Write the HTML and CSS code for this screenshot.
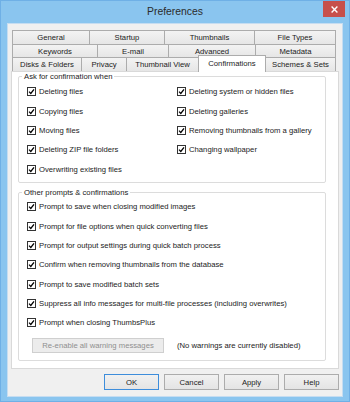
FILE: index.html
```html
<!DOCTYPE html>
<html>
<head>
<meta charset="utf-8">
<link rel="stylesheet" href="styles.css">
</head>
<body>
<div class="window">
  <div class="titlebar">
    <span></span>
    <div class="title">Preferences</div>
    <div class="close"><svg width="7" height="7" viewBox="0 0 7 7"><path d="M0.6 0.6L6.4 6.4M6.4 0.6L0.6 6.4" stroke="#fff" stroke-width="1.4"/></svg></div>
  </div>
  <div class="client">
    <div class="tabs">
      <div class="tabrow r1">
        <div class="tab">General</div>
        <div class="tab">Startup</div>
        <div class="tab">Thumbnails</div>
        <div class="tab">File Types</div>
      </div>
      <div class="tabrow r2">
        <div class="tab">Keywords</div>
        <div class="tab">E-mail</div>
        <div class="tab">Advanced</div>
        <div class="tab">Metadata</div>
      </div>
      <div class="tabrow r3">
        <div class="tab">Disks &amp; Folders</div>
        <div class="tab">Privacy</div>
        <div class="tab">Thumbnail View</div>
        <div class="tab active">Confirmations</div>
        <div class="tab">Schemes &amp; Sets</div>
      </div>
    </div>
    <div class="panel">
      <fieldset class="group g1">
        <legend>Ask for confirmation when</legend>
        <div class="grid">
          <label class="cb"><span class="box"><svg width="7" height="7" viewBox="0 0 7 7"><path d="M1 3.6L2.8 5.4L6 1.3" stroke="#000" stroke-width="1.3" fill="none"/></svg></span>Deleting files</label>
          <label class="cb"><span class="box"><svg width="7" height="7" viewBox="0 0 7 7"><path d="M1 3.6L2.8 5.4L6 1.3" stroke="#000" stroke-width="1.3" fill="none"/></svg></span>Copying files</label>
          <label class="cb"><span class="box"><svg width="7" height="7" viewBox="0 0 7 7"><path d="M1 3.6L2.8 5.4L6 1.3" stroke="#000" stroke-width="1.3" fill="none"/></svg></span>Moving files</label>
          <label class="cb"><span class="box"><svg width="7" height="7" viewBox="0 0 7 7"><path d="M1 3.6L2.8 5.4L6 1.3" stroke="#000" stroke-width="1.3" fill="none"/></svg></span>Deleting ZIP file folders</label>
          <label class="cb"><span class="box"><svg width="7" height="7" viewBox="0 0 7 7"><path d="M1 3.6L2.8 5.4L6 1.3" stroke="#000" stroke-width="1.3" fill="none"/></svg></span>Overwriting existing files</label>
          <label class="cb"><span class="box"><svg width="7" height="7" viewBox="0 0 7 7"><path d="M1 3.6L2.8 5.4L6 1.3" stroke="#000" stroke-width="1.3" fill="none"/></svg></span>Deleting system or hidden files</label>
          <label class="cb"><span class="box"><svg width="7" height="7" viewBox="0 0 7 7"><path d="M1 3.6L2.8 5.4L6 1.3" stroke="#000" stroke-width="1.3" fill="none"/></svg></span>Deleting galleries</label>
          <label class="cb"><span class="box"><svg width="7" height="7" viewBox="0 0 7 7"><path d="M1 3.6L2.8 5.4L6 1.3" stroke="#000" stroke-width="1.3" fill="none"/></svg></span>Removing thumbnails from a gallery</label>
          <label class="cb"><span class="box"><svg width="7" height="7" viewBox="0 0 7 7"><path d="M1 3.6L2.8 5.4L6 1.3" stroke="#000" stroke-width="1.3" fill="none"/></svg></span>Changing wallpaper</label>
        </div>
      </fieldset>
      <fieldset class="group g2">
        <legend>Other prompts &amp; confirmations</legend>
        <div class="list">
          <label class="cb"><span class="box"><svg width="7" height="7" viewBox="0 0 7 7"><path d="M1 3.6L2.8 5.4L6 1.3" stroke="#000" stroke-width="1.3" fill="none"/></svg></span>Prompt to save when closing modified images</label>
          <label class="cb"><span class="box"><svg width="7" height="7" viewBox="0 0 7 7"><path d="M1 3.6L2.8 5.4L6 1.3" stroke="#000" stroke-width="1.3" fill="none"/></svg></span>Prompt for file options when quick converting files</label>
          <label class="cb"><span class="box"><svg width="7" height="7" viewBox="0 0 7 7"><path d="M1 3.6L2.8 5.4L6 1.3" stroke="#000" stroke-width="1.3" fill="none"/></svg></span>Prompt for output settings during quick batch process</label>
          <label class="cb"><span class="box"><svg width="7" height="7" viewBox="0 0 7 7"><path d="M1 3.6L2.8 5.4L6 1.3" stroke="#000" stroke-width="1.3" fill="none"/></svg></span>Confirm when removing thumbnails from the database</label>
          <label class="cb"><span class="box"><svg width="7" height="7" viewBox="0 0 7 7"><path d="M1 3.6L2.8 5.4L6 1.3" stroke="#000" stroke-width="1.3" fill="none"/></svg></span>Prompt to save modified batch sets</label>
          <label class="cb"><span class="box"><svg width="7" height="7" viewBox="0 0 7 7"><path d="M1 3.6L2.8 5.4L6 1.3" stroke="#000" stroke-width="1.3" fill="none"/></svg></span>Suppress all info messages for multi-file processes (including overwrites)</label>
          <label class="cb"><span class="box"><svg width="7" height="7" viewBox="0 0 7 7"><path d="M1 3.6L2.8 5.4L6 1.3" stroke="#000" stroke-width="1.3" fill="none"/></svg></span>Prompt when closing ThumbsPlus</label>
        </div>
        <div class="actions">
          <button class="btn disabled">Re-enable all warning messages</button>
          <span class="note">(No warnings are currently disabled)</span>
        </div>
      </fieldset>
    </div>
    <div class="buttons">
      <button class="btn default">OK</button>
      <button class="btn">Cancel</button>
      <button class="btn">Apply</button>
      <button class="btn">Help</button>
    </div>
  </div>
</div>
</body>
</html>
```
FILE: styles.css
```css
* { box-sizing: border-box; }

body {
  margin: 0;
  width: 350px;
  height: 402px;
  overflow: hidden;
  background: #8ac5ef;
  font-family: "Liberation Sans", Arial, sans-serif;
  font-size: 7.7px;
  color: #1b1b1b;
}

.window {
  height: 402px;
  border: 1px solid #6fb0e6;
  padding: 0 6px 4px;
  display: flex;
  flex-direction: column;
}

.titlebar {
  height: 22px;
  margin: 0 -6px;
  display: grid;
  grid-template-columns: 1fr auto 1fr;
  align-items: start;
}

.title {
  font-size: 10.4px;
  line-height: 12px;
  padding-top: 5px;
  color: #2b2b2b;
}

.close {
  justify-self: end;
  margin-right: 4px;
  width: 22px;
  height: 16px;
  background: #c7504b;
  display: flex;
  align-items: center;
  justify-content: center;
}

.client {
  height: 374px;
  border: 1px solid #c6ddf1;
  background: #f0f0f0;
  padding: 6px 3px 0 3px;
  display: flex;
  flex-direction: column;
}

.tabs {
  margin-left: 1px;
  width: 324px;
}

.tabrow {
  display: flex;
  align-items: flex-start;
}

.r1 { height: 14px; }
.r2 { height: 13px; }
.r3 { height: 14px; }

.tab {
  height: 100%;
  border: 1px solid #acacac;
  border-bottom: none;
  margin-left: -1px;
  background: linear-gradient(#f3f3f3, #e6e6e6);
  display: flex;
  align-items: center;
  justify-content: center;
  white-space: nowrap;
  flex-shrink: 0;
}

.tab:first-child { margin-left: 0; }

.r1 .tab:nth-child(1) { width: 78px; }
.r1 .tab:nth-child(2) { width: 76px; }
.r1 .tab:nth-child(3) { width: 91px; }
.r1 .tab:nth-child(4) { width: 82px; }

.r2 .tab:nth-child(1) { width: 86px; }
.r2 .tab:nth-child(2) { width: 72px; }
.r2 .tab:nth-child(3) { width: 88px; }
.r2 .tab:nth-child(4) { width: 81px; }

.r3 .tab:nth-child(1) { width: 70px; }
.r3 .tab:nth-child(2) { width: 46px; }
.r3 .tab:nth-child(3) { width: 73px; }
.r3 .tab:nth-child(4) { width: 68px; }
.r3 .tab:nth-child(5) { width: 71px; }

.tab.active {
  background: #fff;
  height: 17px;
  margin-top: -2px;
  padding-bottom: 1px;
  position: relative;
  z-index: 1;
}

.panel {
  width: 328px;
  height: 298px;
  border: 1px solid #d9d9d9;
  background: #fff;
  padding-left: 6px;
}

.group {
  margin: 0;
  width: 308px;
  min-width: 0;
  border: 1px solid #dcdcdc;
  border-radius: 2px;
}

.group legend {
  padding: 0 2px;
  line-height: 9px;
}

.g1 { padding: 1.33px 0 3px 3px; }

.g2 {
  margin-top: 5px;
  padding: 0.33px 0 7px 3px;
}

.grid {
  display: grid;
  grid-template-columns: 150px 1fr;
  grid-template-rows: repeat(5, 19.33px);
  grid-auto-flow: column;
}

.list {
  display: grid;
  grid-template-rows: repeat(7, 19.33px);
}

.cb {
  display: flex;
  align-items: center;
  gap: 3px;
  padding-left: 5px;
  white-space: nowrap;
}

.box {
  width: 9px;
  height: 9px;
  flex-shrink: 0;
  border: 1px solid #333;
  background: #fff;
  display: flex;
  align-items: center;
  justify-content: center;
}

.actions {
  display: flex;
  align-items: center;
  height: 15px;
  margin-top: 5.33px;
}

.btn {
  font: inherit;
  color: #1b1b1b;
  width: 55px;
  height: 16px;
  padding: 0;
  border: 1px solid #acacac;
  background: linear-gradient(#f1f1f1, #e4e4e4);
}

.btn.default { border-color: #3d8ddb; }

.btn.disabled {
  width: 132px;
  height: 15px;
  margin-left: 10px;
  color: #8f8f8f;
  background: #ececec;
  border-color: #cfcfcf;
}

.note { margin-left: 13px; }

.buttons {
  display: flex;
  justify-content: flex-end;
  gap: 5px;
  margin-top: 5px;
}
```
